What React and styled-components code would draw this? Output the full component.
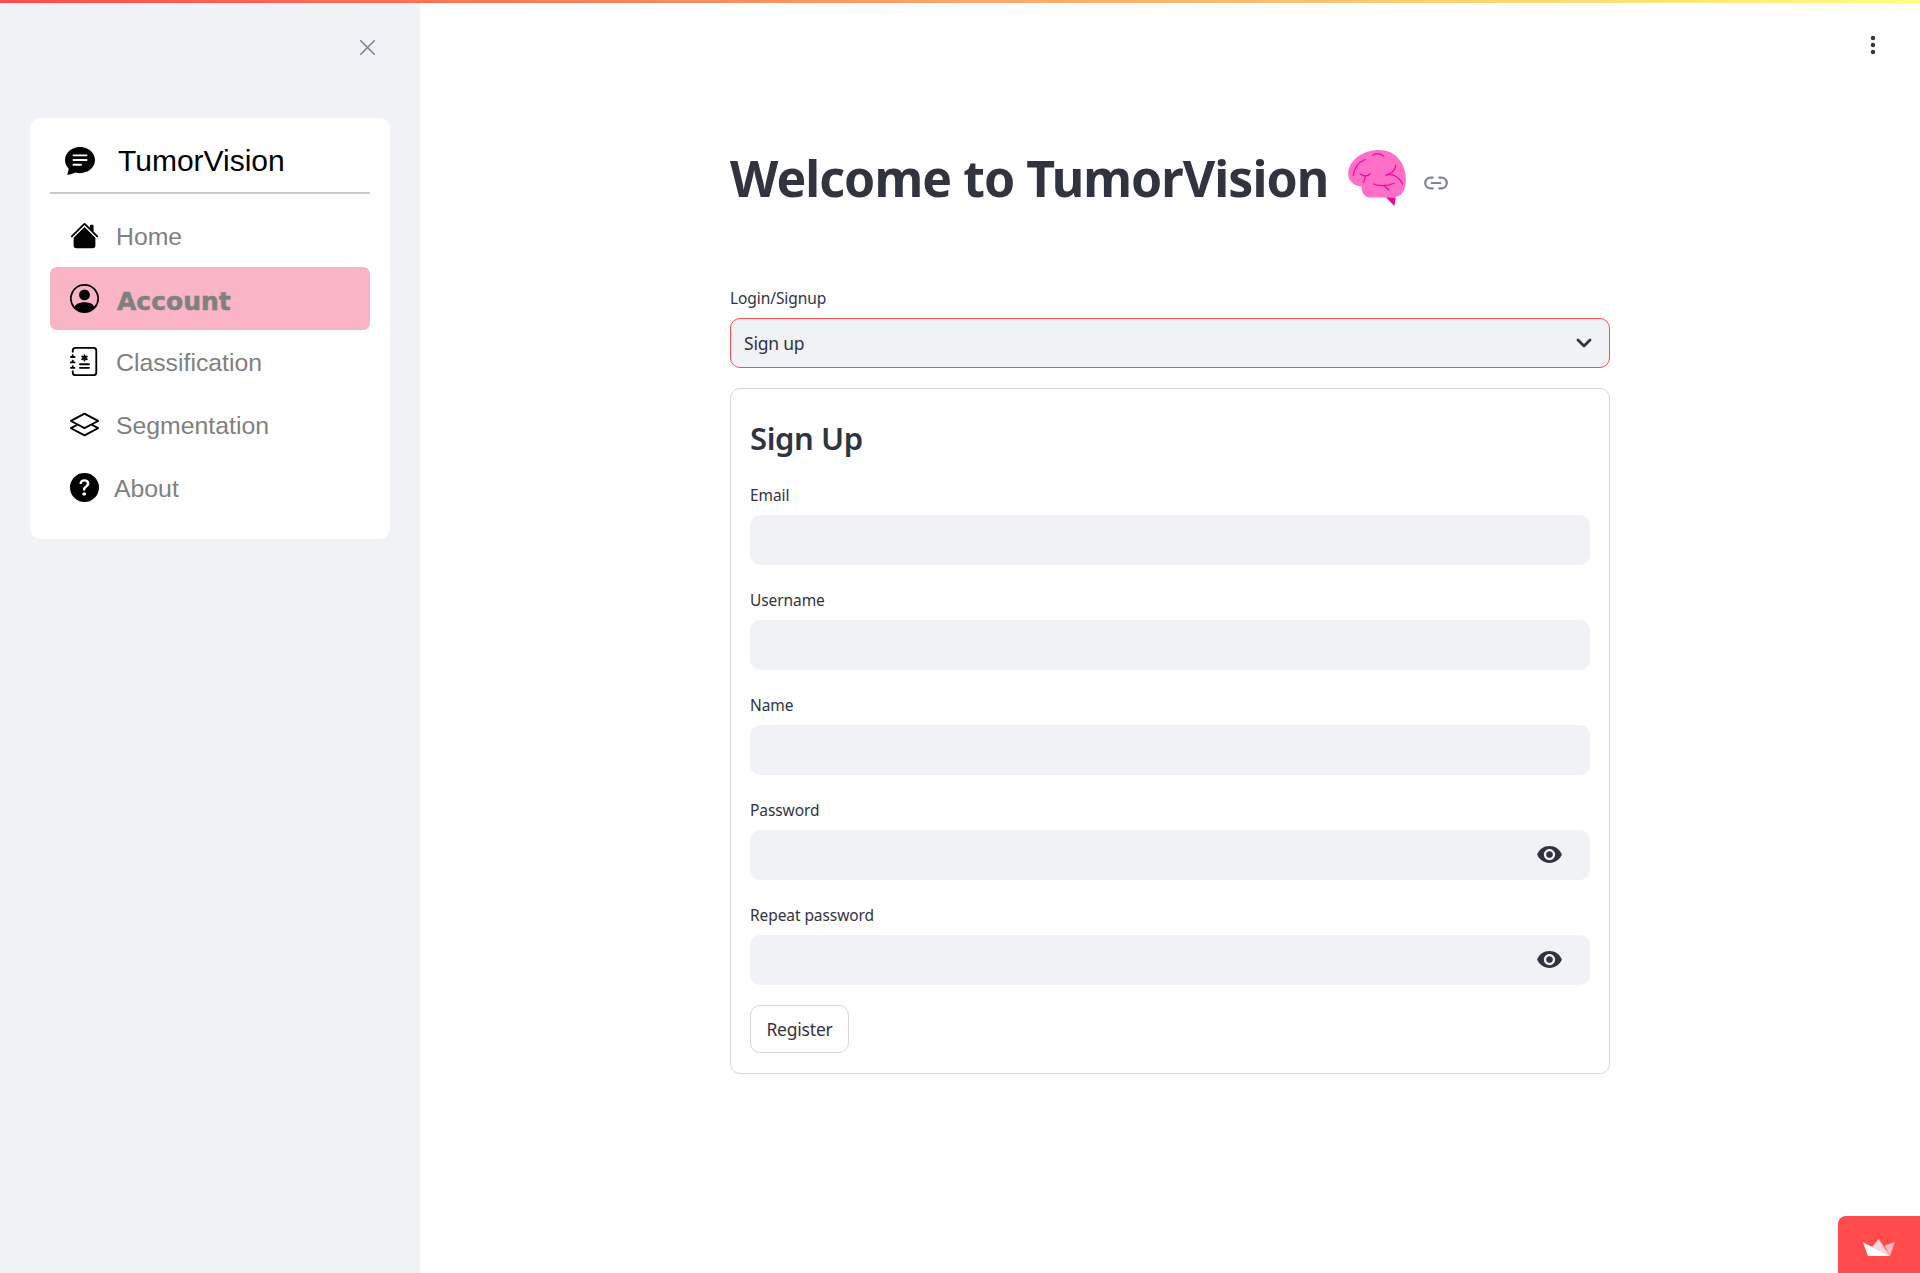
import React from 'react';
import styled, { createGlobalStyle } from 'styled-components';
import { BsChatTextFill, BsHouseFill, BsPersonCircle, BsJournalMedical, BsLayers, BsQuestionCircleFill } from 'react-icons/bs';
import { MdVisibility } from 'react-icons/md';
import { X, Link2, EllipsisVertical, ChevronDown } from 'lucide-react';

const GlobalStyle = createGlobalStyle`
  html, body { margin: 0; padding: 0; height: 100%; background: #fff; overflow: hidden; }
  * { box-sizing: border-box; }
`;

const uiFont = `"Noto Sans", "Liberation Sans", sans-serif`;
const menuFont = `"Liberation Sans", Arial, sans-serif`;

const Page = styled.div`
  height: 1273px;
  display: flex;
  flex-direction: column;
  position: relative;
  overflow: hidden;
  font-family: ${uiFont};
  color: #31333f;
`;

const Decoration = styled.div`
  height: 3px;
  flex: none;
  background: linear-gradient(90deg, #ff4b4b, #fffd80);
`;

const Shell = styled.div`
  flex: 1;
  display: flex;
  min-height: 0;
`;

const Sidebar = styled.aside`
  width: 420px;
  flex: none;
  background: #f0f2f6;
  padding: 0 30px;
`;

const CloseRow = styled.div`
  height: 115px;
  display: flex;
  justify-content: flex-end;
  padding: 31px 9px 0 0;
  color: #808495;
  svg { display: block; }
`;

const MenuCard = styled.nav`
  background: #fff;
  border-radius: 10px;
  padding: 20px;
`;

const MenuHeader = styled.div`
  height: 56px;
  display: flex;
  align-items: center;
  padding: 0 0 9px 15px;
  border-bottom: 2px solid #cbcbcb;
  margin-bottom: 10px;
  font-family: ${menuFont};
  font-size: 30px;
  color: #000;
  svg { margin-right: 23px; margin-top: -1px; }
`;

const MenuItem = styled.div`
  height: 63px;
  display: flex;
  align-items: center;
  padding: 2px 0 0 20px;
  border-radius: 7px;
  font-family: ${p => (p.$active ? `"DejaVu Sans", ${menuFont}` : menuFont)};
  font-size: ${p => (p.$active ? '25px' : '24.8px')};
  color: #808080;
  background: ${p => (p.$active ? '#f9b4c6' : 'transparent')};
  font-weight: ${p => (p.$active ? 700 : 400)};
  -webkit-text-stroke: ${p => (p.$active ? '0.5px #808080' : '0')};
  span { margin-top: ${p => (p.$active ? '3px' : '0')}; }
  svg { color: #000; margin-right: ${p => p.$gap}px; margin-top: -2px; flex: none; }
`;

const Main = styled.main`
  flex: 1;
  display: flex;
  justify-content: center;
`;

const Column = styled.div`
  width: 880px;
  padding-top: 137px;
`;

const Title = styled.h1`
  margin: 0 0 72px;
  height: 76px;
  display: flex;
  align-items: center;
  font-size: 50px;
  font-weight: 700;
  letter-spacing: -0.95px;
  line-height: 76px;
  white-space: nowrap;
`;

const Brain = styled.svg`
  width: 58px;
  height: 56px;
  margin: 0 17px 0 20px;
  flex: none;
`;

const AnchorIcon = styled.span`
  display: flex;
  color: #808495;
  margin-top: 9px;
`;

const Field = styled.div`
  margin-bottom: ${p => p.$gap}px;
`;

const Label = styled.label`
  display: block;
  height: 20px;
  line-height: 20px;
  margin-bottom: 10px;
  font-size: 15.5px;
  letter-spacing: -0.08px;
`;

const SelectBox = styled.div`
  height: 50px;
  display: flex;
  align-items: center;
  justify-content: space-between;
  padding: 0 13px 0 13px;
  background: #f0f2f6;
  border: 1px solid #ff4b4b;
  border-radius: 10px;
  font-size: 17.5px;
  letter-spacing: -0.2px;
  svg { margin-top: -1px; }
`;

const FormCard = styled.form`
  height: 686px;
  border: 1px solid #d6d6d9;
  border-radius: 10px;
  padding: 20px 19px;
`;

const FormTitle = styled.h2`
  margin: 0 0 18px;
  height: 58px;
  display: flex;
  align-items: center;
  font-size: 31px;
  font-weight: 600;
  letter-spacing: -0.4px;
`;

const InputBox = styled.div`
  height: 50px;
  display: flex;
  align-items: center;
  justify-content: flex-end;
  padding-right: 27px;
  background: #f0f2f6;
  border-radius: 10px;
  svg { margin-top: -2px; }
`;

const RegisterButton = styled.button`
  height: 48px;
  width: 99px;
  padding: 0;
  background: #fff;
  border: 1px solid #d6d6d9;
  border-radius: 10px;
  font-family: ${uiFont};
  font-size: 17.5px;
  letter-spacing: -0.2px;
  color: #31333f;
`;

const MenuDots = styled.div`
  position: absolute;
  top: 33px;
  right: 35px;
  color: #31333f;
  svg { display: block; }
`;

const DeployBadge = styled.div`
  position: absolute;
  right: 0;
  bottom: 0;
  width: 82px;
  height: 57px;
  background: #ff4b4b;
  border-top-left-radius: 8px;
  display: flex;
  align-items: center;
  justify-content: center;
  padding-top: 6px;
`;

const fields = [
  { label: 'Email', gap: 25 },
  { label: 'Username', gap: 25 },
  { label: 'Name', gap: 25 },
  { label: 'Password', gap: 25, secret: true },
  { label: 'Repeat password', gap: 20, secret: true },
];

const menu = [
  { label: 'Home', Icon: BsHouseFill, gap: 17 },
  { label: 'Account', Icon: BsPersonCircle, gap: 18, active: true },
  { label: 'Classification', Icon: BsJournalMedical, gap: 17 },
  { label: 'Segmentation', Icon: BsLayers, gap: 17 },
  { label: 'About', Icon: BsQuestionCircleFill, gap: 15 },
];

function BrainIcon() {
  return (
    <Brain viewBox="0 0 170 165">
      <path d="M110 138 L140 140 L136 165 Z" fill="#f4009c" />
      <path
        d="M0 70 C0 30 45 0 90 0 C140 0 170 40 170 85 C170 120 158 140 130 140 L65 140 C50 140 38 125 40 108 C15 105 0 90 0 70 Z"
        fill="#ff6ec7"
      />
      <g fill="none" stroke="#f4009c" strokeWidth="3.5" strokeLinecap="round">
        <path d="M15 75 C17 55 30 36 50 28" />
        <path d="M73 15 C80 9 95 9 105 18" />
        <path d="M35 70 C42 76 55 80 65 70 M50 78 C50 84 48 90 45 95" />
        <path d="M140 45 C140 58 128 70 110 75 C130 68 150 78 160 100" />
        <path d="M75 100 C90 106 115 108 135 98 M105 105 C110 108 116 112 120 118" />
      </g>
    </Brain>
  );
}

function StreamlitMark() {
  return (
    <svg width="32" height="17" viewBox="0 0 32 17">
      <path d="M15.7 0 L27 17 L9 8 Z" fill="#ffd3dc" />
      <path d="M32 3 L27 17 L21.5 6.5 Z" fill="#ffb6c4" />
      <path d="M0 3.3 L27 17 L5 17 Z" fill="#fff" />
    </svg>
  );
}

export default function App() {
  return (
    <Page>
      <GlobalStyle />
      <Decoration />
      <Shell>
        <Sidebar>
          <CloseRow>
            <X size={27} strokeWidth={1.5} />
          </CloseRow>
          <MenuCard>
            <MenuHeader>
              <BsChatTextFill size={30} />
              TumorVision
            </MenuHeader>
            {menu.map(({ label, Icon, active, gap }) => (
              <MenuItem key={label} $active={active} $gap={gap}>
                <Icon size={29} />
                <span>{label}</span>
              </MenuItem>
            ))}
          </MenuCard>
        </Sidebar>
        <Main>
          <Column>
            <Title>
              Welcome to TumorVision
              <BrainIcon />
              <AnchorIcon><Link2 size={26} strokeWidth={2} /></AnchorIcon>
            </Title>
            <Field $gap={20}>
              <Label>Login/Signup</Label>
              <SelectBox>
                Sign up
                <ChevronDown size={24} strokeWidth={2.8} />
              </SelectBox>
            </Field>
            <FormCard>
              <FormTitle>Sign Up</FormTitle>
              {fields.map(({ label, secret, gap }) => (
                <Field key={label} $gap={gap}>
                  <Label>{label}</Label>
                  <InputBox>{secret && <MdVisibility size={27} />}</InputBox>
                </Field>
              ))}
              <RegisterButton type="button">Register</RegisterButton>
            </FormCard>
          </Column>
        </Main>
      </Shell>
      <MenuDots><EllipsisVertical size={24} strokeWidth={2.4} /></MenuDots>
      <DeployBadge><StreamlitMark /></DeployBadge>
    </Page>
  );
}
